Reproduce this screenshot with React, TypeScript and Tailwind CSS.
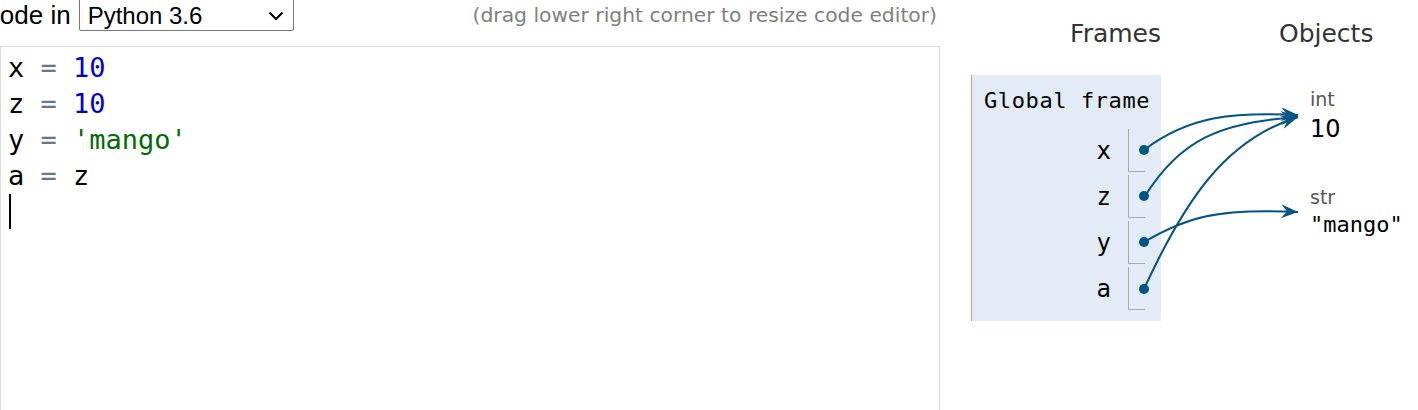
import React from "react";

type Arrow = { d: string; tip: [number, number]; from: [number, number] };

const arrows: Arrow[] = [
  { d: "M1144 150 C1190 115, 1235 112, 1298 115", tip: [1298, 115], from: [1235, 112] },
  { d: "M1145 196 C1180 140, 1220 122, 1298 117", tip: [1298, 117], from: [1220, 122] },
  { d: "M1144 242 C1185 218, 1215 208, 1298 212", tip: [1298, 212], from: [1215, 208] },
  { d: "M1144 289 C1185 200, 1225 140, 1298 117", tip: [1298, 117], from: [1225, 140] },
];

const dots: [number, number][] = [
  [1144, 150],
  [1144, 196],
  [1144, 242],
  [1144, 289],
];

function Arrows() {
  return (
    <svg
      className="absolute left-0 top-0 pointer-events-none"
      width={1418}
      height={410}
      viewBox="0 0 1418 410"
    >
      {arrows.map((a, i) => {
        const ang = (Math.atan2(a.tip[1] - a.from[1], a.tip[0] - a.from[0]) * 180) / Math.PI;
        return (
          <g key={i}>
            <path d={a.d} fill="none" stroke="#005583" strokeWidth={2} />
            <polygon
              points="0,0 -17,-7 -11,0 -17,7"
              fill="#005583"
              transform={`translate(${a.tip[0]} ${a.tip[1]}) rotate(${ang})`}
            />
          </g>
        );
      })}
      {dots.map((p, i) => (
        <circle key={i} cx={p[0]} cy={p[1]} r={5} fill="#005583" />
      ))}
    </svg>
  );
}

const mono = "font-['DejaVu_Sans_Mono',monospace]";
const sans = "font-['DejaVu_Sans',Verdana,sans-serif]";

function CodeLine({ children }: { children: React.ReactNode }) {
  return <div className="h-[36px] leading-[36px] whitespace-pre">{children}</div>;
}

export default function App() {
  const vars = ["x", "z", "y", "a"];
  return (
    <div className="relative flex w-[1418px] h-[410px] overflow-hidden bg-white">
      {/* Left: editor */}
      <div className="w-[940px] shrink-0 flex flex-col">
        <div className="h-[46px] shrink-0 flex items-start justify-between">
          <div className="flex items-center -mt-[2px] -ml-[19px] font-['Liberation_Sans',Arial,sans-serif] text-black">
            <span className="text-[26px] leading-[32px] pt-[1px]">Code in</span>
            <div className="ml-[8px] w-[215px] h-[33px] border border-[#767676] rounded-[2px] flex items-center justify-between pl-[8px] pr-[9px] bg-white text-[24px]">
              <span className="leading-[30px] pt-[2px]">Python 3.6</span>
              <svg width="16" height="10" viewBox="0 0 16 10" className="mt-[2px]">
                <path d="M1.5 1.5 L8 8 L14.5 1.5" fill="none" stroke="#000" strokeWidth="2" />
              </svg>
            </div>
          </div>
          <div className={`${sans} text-[20.3px] leading-[24px] text-[#808080] pt-[3px] pr-[3px]`}>
            (drag lower right corner to resize code editor)
          </div>
        </div>
        <div className={`h-[400px] shrink-0 border border-[#dcdcdc] pt-[3px] pl-[7px] ${mono} text-[27px] text-black`}>
          <CodeLine>
            x <span className="text-[#687687]">=</span> <span className="text-[#0000cd]">10</span>
          </CodeLine>
          <CodeLine>
            z <span className="text-[#687687]">=</span> <span className="text-[#0000cd]">10</span>
          </CodeLine>
          <CodeLine>
            y <span className="text-[#687687]">=</span> <span className="text-[#036a07]">'mango'</span>
          </CodeLine>
          <CodeLine>
            a <span className="text-[#687687]">=</span> z
          </CodeLine>
          <div className="h-[36px] flex items-start">
            <div className="w-[2px] h-[35px] bg-black ml-[1px]" />
          </div>
        </div>
      </div>

      {/* Right: visualization */}
      <div className="flex ml-[31px]">
        <div className="w-[190px] flex flex-col">
          <div className={`${sans} text-[25px] leading-[30px] text-[#333] text-right pt-[19px]`}>Frames</div>
          <div className="mt-[26px] h-[246px] bg-[#e2ebf6] border-l border-[#aaa] flex flex-col">
            <div className={`${mono} text-[22px] tracking-[0.6px] leading-[26px] text-black pl-[12px] pt-[13px]`}>
              Global frame
            </div>
            <div className="mt-[15px] flex flex-col gap-[3px] pr-[16px]">
              {vars.map((v) => (
                <div key={v} className="flex items-center justify-end h-[43px]">
                  <span className={`${mono} text-[24px] leading-[28px] text-black pr-[17px]`}>{v}</span>
                  <div className="w-[17px] h-[43px] border-l border-b border-[#aaa]" />
                </div>
              ))}
            </div>
          </div>
        </div>
        <div className="ml-[118px] flex flex-col">
          <div className={`${sans} text-[25px] leading-[30px] text-[#333] pt-[19px]`}>Objects</div>
          <div className="pl-[31px] mt-[39px] flex flex-col">
            <div className={`${sans} text-[19px] leading-[22px] text-[#555]`}>int</div>
            <div className={`${sans} text-[24px] leading-[28px] text-black mt-[5px]`}>10</div>
            <div className={`${sans} text-[19px] leading-[22px] text-[#555] mt-[43px]`}>str</div>
            <div className={`${mono} text-[22px] leading-[26px] text-black mt-[4px]`}>"mango"</div>
          </div>
        </div>
      </div>

      <Arrows />
    </div>
  );
}
